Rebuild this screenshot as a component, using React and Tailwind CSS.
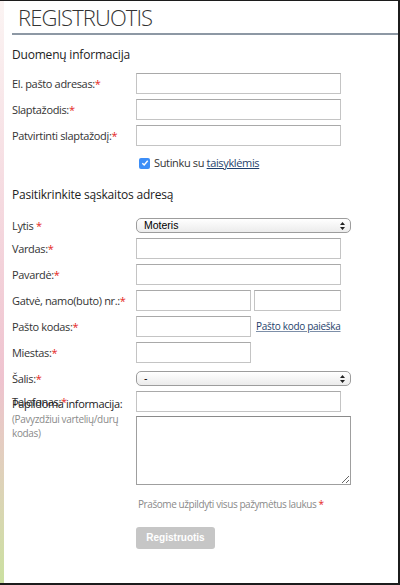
import React from 'react';

const font = { fontFamily: '"Open Sans", "Noto Sans", sans-serif' };

const Star = ({ space }) => (
  <span className="text-[#e5261b]">{space ? ' *' : '*'}</span>
);

const TextInput = ({ className = 'w-[205px]' }) => (
  <input
    type="text"
    className={`h-[21px] ${className} border border-[#c4c4c4] border-t-[#a9a9a9] bg-white outline-none`}
  />
);

const SelectBox = ({ value }) => (
  <div className="relative flex h-[15px] w-[215px] items-center rounded-[5px] border border-[#9d9d9d] bg-linear-to-b from-white to-[#ececec] pl-[7px] text-[10.5px] text-black [font-family:'Liberation_Sans',Arial,sans-serif]">
    <span>{value}</span>
    <svg className="absolute right-[5px] top-[3px]" width="5" height="8" viewBox="0 0 5 8">
      <path d="M2.5 0 L5 3 L0 3 Z M0 5 L5 5 L2.5 8 Z" fill="#222" />
    </svg>
  </div>
);

const labelCls = 'w-[124px] whitespace-nowrap text-[11px] leading-[16px] tracking-[-0.35px] text-[#333]';

const Row = ({ label, star = true, space = false, children, className = '' }) => (
  <div className={`flex h-[21px] items-center ${className}`}>
    <label className={labelCls}>
      {label}
      {star && <Star space={space} />}
    </label>
    {children}
  </div>
);

export default function App() {
  return (
    <div className="flex h-[585px] w-[400px] overflow-hidden border-t border-r-2 border-b-2 border-[#1c1c1c] bg-white" style={font}>
      <div className="w-[4px] shrink-0 bg-linear-to-b from-[#fbf4f3] via-[#efc3cf] via-65% to-[#cbe0a0]" />
      <div className="flex flex-1 flex-col pl-[8px]">
        <h1 className="h-[32px] pl-[6px] pt-[2px] text-[22px] font-light leading-[28px] tracking-[-0.9px] text-[#333]">
          REGISTRUOTIS
        </h1>
        <div className="h-[2px] bg-[#8d98a4]" />

        <h2 className="mt-[10px] text-[12px] leading-[20px] tracking-[-0.2px] text-[#222]">Duomenų informacija</h2>

        <div className="mt-[8px] flex flex-col gap-[5px]">
          <Row label="El. pašto adresas:"><TextInput /></Row>
          <Row label="Slaptažodis:"><TextInput /></Row>
          <Row label="Patvirtinti slaptažodį:"><TextInput /></Row>
        </div>

        <div className="mt-[9px] flex h-[16px] items-center pl-[127px]">
          <span className="flex h-[11px] w-[11px] items-center justify-center rounded-[2px] bg-[#3d8ef7]">
            <svg width="8" height="8" viewBox="0 0 8 8">
              <path d="M1.3 4.2 L3.2 6 L6.7 1.8" stroke="white" strokeWidth="1.4" fill="none" />
            </svg>
          </span>
          <span className="ml-[4px] text-[11px] tracking-[-0.35px] text-[#333]">
            Sutinku su <a className="text-[#1f3f6c] underline">taisyklėmis</a>
          </span>
        </div>

        <h2 className="mt-[14px] text-[12px] leading-[20px] tracking-[-0.2px] text-[#222]">Pasitikrinkite sąskaitos adresą</h2>

        <div className="mt-[13px] flex flex-col">
          <div className="flex h-[15px] items-center">
            <label className={labelCls}>
              Lytis<Star space />
            </label>
            <SelectBox value="Moteris" />
          </div>
          <div className="mt-[5px] flex flex-col gap-[5px]">
            <Row label="Vardas:"><TextInput /></Row>
            <Row label="Pavardė:"><TextInput /></Row>
            <Row label="Gatvė, namo(buto) nr.:">
              <TextInput className="w-[115px]" />
              <TextInput className="ml-[3px] w-[87px]" />
            </Row>
            <Row label="Pašto kodas:">
              <TextInput className="w-[115px]" />
              <a className="ml-[5px] text-[10px] tracking-[-0.3px] text-[#1f3f6c] underline decoration-[#7d8fa8]">Pašto kodo paieška</a>
            </Row>
            <Row label="Miestas:"><TextInput className="w-[115px]" /></Row>
          </div>
          <div className="mt-[8px] flex h-[15px] items-center">
            <label className={labelCls}>
              Šalis:<Star />
            </label>
            <SelectBox value="-" />
          </div>
          <Row label="Telefonas:" className="mt-[5px]"><TextInput /></Row>
          <div className="mt-[4px] flex">
            <div className="-mt-[20px] w-[124px]">
              <div className="whitespace-nowrap text-[11px] leading-[16px] tracking-[-0.35px] text-[#222]">Papildoma informacija:</div>
              <div className="pr-[4px] text-[10px] leading-[14px] tracking-[-0.35px] text-[#8a8a8a]">
                (Pavyzdžiui vartelių/durų kodas)
              </div>
            </div>
            <textarea className="h-[69px] w-[215px] resize border border-[#9f9f9f] border-t-[#8a8a8a] outline-none" />
          </div>
          <p className="mt-[11px] pl-[126px] text-[10px] leading-[16px] tracking-[-0.42px] text-[#8a8a8a]">
            Prašome užpildyti visus pažymėtus laukus <Star />
          </p>
          <div className="mt-[11px] pl-[124px]">
            <button className="h-[22px] w-[79px] rounded-[3px] bg-[#c6c6c6] text-[10px] font-bold text-white [font-family:'Liberation_Sans',Arial,sans-serif]">
              Registruotis
            </button>
          </div>
        </div>
      </div>
    </div>
  );
}
